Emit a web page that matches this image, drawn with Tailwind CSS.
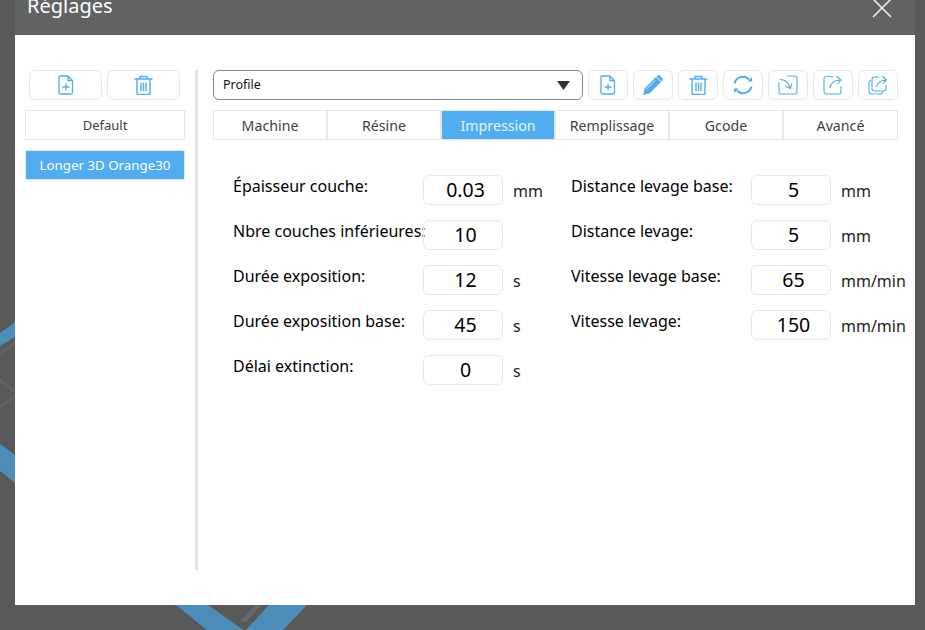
<!DOCTYPE html>
<html lang="fr">
<head>
    <meta charset="UTF-8">
    <title>Réglages</title>
    <script src="https://cdn.jsdelivr.net/npm/@tailwindcss/browser@4"></script>
</head>
<body class="relative w-[925px] h-[630px] overflow-hidden bg-[#595959] font-['Noto_Sans','Open_Sans',sans-serif] text-black">
    <!-- 3D scene behind the dialog -->
    <svg class="absolute inset-0" width="925" height="630" viewBox="0 0 925 630" fill="none">
        <polygon points="0,333 15,322 15,337 0,346" fill="#4d8db9"/>
        <polygon points="0,352 15,341 15,345 0,355" fill="#626262"/>
        <polygon points="0,378 15,390 15,393 0,383" fill="#626262"/>
        <polygon points="0,405 15,395 15,398 0,409" fill="#626262"/>
        <polygon points="0,444 15,455 15,483 0,471" fill="#4d8db9"/>
        <polygon points="176,605 208,605 245,631 269,605 307,605 283,630 207,630" fill="#4d8db9"/>
        <polygon points="240,621 255,605 262,605 246,622" fill="#686868"/>
    </svg>

    <div class="relative ml-[15px] -mt-[15px] w-[900px] h-[620px] flex flex-col">
        <div class="h-[50px] shrink-0 bg-[#616264] flex items-center justify-between pl-3 pr-[23px] text-white">
            <span class="text-[20px] leading-none mb-[8px]">Réglages</span>
            <svg class="mb-[4px]" width="20" height="20" viewBox="0 0 20 20" stroke="#f2f2f2" stroke-width="1.5"><path d="M1 1 19 19M19 1 1 19"/></svg>
        </div>

        <div class="flex-1 bg-white flex pt-[35px] pb-[35px]">
            <!-- Profile list -->
            <div class="w-[170px] shrink-0 pl-[10px] flex flex-col">
                <div class="flex gap-[5px] pl-1">
                    <button class="w-[73px] h-[30px] border border-[#e8e8ec] rounded-md flex items-center justify-center">
                        <svg width="16" height="20" viewBox="0 0 16 20" fill="none" stroke="#4fadf0" stroke-width="1.3"><path d="M1.500 1h8.500l4.500 4.500V17.500a1.500 1.500 0 0 1-1.500 1.500H2.500A1.500 1.500 0 0 1 1 17.500V1.500z"/><path d="M10 1v4.500h4.500M8 8.500v7M4.500 12h7"/></svg>
                    </button>
                    <button class="w-[73px] h-[30px] border border-[#e8e8ec] rounded-md flex items-center justify-center">
                        <svg width="19" height="20" viewBox="0 0 19 20" fill="none" stroke="#4fadf0" stroke-width="1.4"><path d="M.5 4h18M6 4V1.500h7V4M3 4v14a1.500 1.500 0 0 0 1.500 1.500h10A1.500 1.500 0 0 0 16 18V4M7 7.500v8.500M9.500 7.500v8.500M12 7.500v8.500"/></svg>
                    </button>
                </div>
                <div class="mt-[10px] h-[30px] border border-[#e6e6ea] flex items-center justify-center pt-[2px] text-[13px] text-[#3a3f48]">Default</div>
                <div class="mt-[10px] h-[30px] bg-[#4fadf0] border border-[#dfeaf3] flex items-center justify-center pt-[2px] text-[13.300px] text-white">Longer 3D Orange30</div>
            </div>

            <div class="ml-[10px] w-[3px] bg-[#e2e2e7]"></div>

            <!-- Settings -->
            <div class="ml-[15px] w-[685px] flex flex-col">
                <div class="flex gap-[5px]">
                    <div class="w-[370px] h-[30px] border border-[#85878b] rounded-md flex items-center justify-between pl-[9px] pr-[12px] pt-px text-[12.500px] text-[#111]">
                        <span>Profile</span>
                        <svg width="13" height="9" viewBox="0 0 13 9"><path d="M0 0h13L6.500 9z" fill="#333"/></svg>
                    </div>
                    <div class="flex gap-[5px]">
                        <button class="w-[40px] h-[30px] border border-[#e8e8ec] rounded-md flex items-center justify-center">
                            <svg width="16" height="20" viewBox="0 0 16 20" fill="none" stroke="#4fadf0" stroke-width="1.3"><path d="M1.500 1h8.500l4.500 4.500V17.500a1.500 1.500 0 0 1-1.500 1.500H2.500A1.500 1.500 0 0 1 1 17.500V1.500z"/><path d="M10 1v4.500h4.500M8 8.500v7M4.500 12h7"/></svg>
                        </button>
                        <button class="w-[40px] h-[30px] border border-[#e8e8ec] rounded-md flex items-center justify-center">
                            <svg width="20" height="20" viewBox="0 0 20 20" fill="#4fadf0"><path d="M0 20l1.800-6.800L13 2l5 5L6.800 18.200z"/><path d="M14.200 .8a2 2 0 0 1 2.800 0l2.200 2.200a2 2 0 0 1 0 2.800L18.400 6.500 13.500 1.600z"/><path d="M3 14.500l9-9" stroke="#fff" stroke-width=".8"/></svg>
                        </button>
                        <button class="w-[40px] h-[30px] border border-[#e8e8ec] rounded-md flex items-center justify-center">
                            <svg width="19" height="20" viewBox="0 0 19 20" fill="none" stroke="#4fadf0" stroke-width="1.4"><path d="M.5 4h18M6 4V1.500h7V4M3 4v14a1.500 1.500 0 0 0 1.500 1.500h10A1.500 1.500 0 0 0 16 18V4M7 7.500v8.500M9.500 7.500v8.500M12 7.500v8.500"/></svg>
                        </button>
                        <button class="w-[40px] h-[30px] border border-[#e8e8ec] rounded-md flex items-center justify-center">
                            <svg width="20" height="20" viewBox="0 0 20 20" fill="none" stroke="#4fadf0" stroke-width="2"><path d="M1.500 8.500A8.500 8.500 0 0 1 16 4.500M18.500 11.500A8.500 8.500 0 0 1 4 15.500"/><path d="M14.500 6.500h4.500V2z M5.500 13.500H1V18z" fill="#4fadf0" stroke="none"/></svg>
                        </button>
                        <button class="w-[40px] h-[30px] border border-[#e8e8ec] rounded-md flex items-center justify-center">
                            <svg width="20" height="20" viewBox="0 0 20 20" fill="none" stroke="#4fadf0" stroke-width="1.100"><path d="M1 7v9.500A2.500 2.500 0 0 0 3.500 19h13a2.500 2.500 0 0 0 2.500-2.500v-13A2.500 2.500 0 0 0 16.500 1H9"/><path d="M1.500 4.500c5 0 9 2.500 10.500 8M7.500 11.500l4.800 2 1.700-5"/></svg>
                        </button>
                        <button class="w-[40px] h-[30px] border border-[#e8e8ec] rounded-md flex items-center justify-center">
                            <svg width="20" height="20" viewBox="0 0 20 20" fill="none" stroke="#4fadf0" stroke-width="1.100"><path d="M10 1.500H3.500A2.500 2.500 0 0 0 1 4v12.500A2.500 2.500 0 0 0 3.500 19h12a2.500 2.500 0 0 0 2.500-2.500V11"/><path d="M7 13c.5-4.500 4-7.500 10-8M13.500 1l4.500 4-3.500 4"/></svg>
                        </button>
                        <button class="w-[40px] h-[30px] border border-[#e8e8ec] rounded-md flex items-center justify-center">
                            <svg width="20" height="20" viewBox="0 0 20 20" fill="none" stroke="#4fadf0" stroke-width="1.100"><path d="M3 5.500A2 2 0 0 0 1 7.500v9A2.500 2.500 0 0 0 3.500 19h9a2 2 0 0 0 2-2"/><path d="M11 2H6.500A2.500 2.500 0 0 0 4 4.500v9A2.500 2.500 0 0 0 6.500 16h9a2.500 2.500 0 0 0 2.500-2.500V10"/><path d="M8.500 12c.5-4 3.500-6.500 10-7M14.500 1l4 4-3.500 3.500"/></svg>
                        </button>
                    </div>
                </div>

                <div class="mt-[10px] h-[30px] grid grid-cols-[114px_114px_114px_114px_114px_1fr] border border-[#e6e6ea] text-[14.200px] text-[#3a3f48]">
                    <div class="flex items-center justify-center pt-px border-r-2 border-[#e6e6ea]">Machine</div>
                    <div class="flex items-center justify-center pt-px border-r-2 border-[#e6e6ea]">Résine</div>
                    <div class="flex items-center justify-center pt-px border-r-2 border-[#e6e6ea] bg-[#4fadf0] text-[#eaf6ff]">Impression</div>
                    <div class="flex items-center justify-center pt-px border-r-2 border-[#e6e6ea]">Remplissage</div>
                    <div class="flex items-center justify-center pt-px border-r-2 border-[#e6e6ea]">Gcode</div>
                    <div class="flex items-center justify-center pt-px">Avancé</div>
                </div>

                <div class="mt-[35px] pl-[20px] flex">
                    <div class="w-[338px] shrink-0 flex flex-col gap-[15px]">
                        <div class="flex h-[30px]">
                            <span class="w-[190px] shrink-0 text-[16px] leading-[22px] whitespace-nowrap">Épaisseur couche:</span>
                            <div class="w-[80px] h-[30px] shrink-0 border border-[#e8e8ec] rounded-md flex items-center justify-center pl-[5px] bg-white text-[19.500px]">0.03</div>
                            <span class="ml-[10px] text-[16px] leading-[33px] text-[#222]">mm</span>
                        </div>
                        <div class="flex h-[30px]">
                            <span class="w-[190px] shrink-0 text-[16px] leading-[22px] whitespace-nowrap">Nbre couches inférieures:</span>
                            <div class="w-[80px] h-[30px] shrink-0 border border-[#e8e8ec] rounded-md flex items-center justify-center pl-[5px] text-[19.500px]">10</div>
                        </div>
                        <div class="flex h-[30px]">
                            <span class="w-[190px] shrink-0 text-[16px] leading-[22px] whitespace-nowrap">Durée exposition:</span>
                            <div class="w-[80px] h-[30px] shrink-0 border border-[#e8e8ec] rounded-md flex items-center justify-center pl-[5px] text-[19.500px]">12</div>
                            <span class="ml-[10px] text-[16px] leading-[33px] text-[#222]">s</span>
                        </div>
                        <div class="flex h-[30px]">
                            <span class="w-[190px] shrink-0 text-[16px] leading-[22px] whitespace-nowrap">Durée exposition base:</span>
                            <div class="w-[80px] h-[30px] shrink-0 border border-[#e8e8ec] rounded-md flex items-center justify-center pl-[5px] text-[19.500px]">45</div>
                            <span class="ml-[10px] text-[16px] leading-[33px] text-[#222]">s</span>
                        </div>
                        <div class="flex h-[30px]">
                            <span class="w-[190px] shrink-0 text-[16px] leading-[22px] whitespace-nowrap">Délai extinction:</span>
                            <div class="w-[80px] h-[30px] shrink-0 border border-[#e8e8ec] rounded-md flex items-center justify-center pl-[5px] text-[19.500px]">0</div>
                            <span class="ml-[10px] text-[16px] leading-[33px] text-[#222]">s</span>
                        </div>
                    </div>
                    <div class="shrink-0 flex flex-col gap-[15px]">
                        <div class="flex h-[30px]">
                            <span class="w-[180px] shrink-0 text-[16px] leading-[22px] whitespace-nowrap">Distance levage base:</span>
                            <div class="w-[80px] h-[30px] shrink-0 border border-[#e8e8ec] rounded-md flex items-center justify-center pl-[5px] text-[19.500px]">5</div>
                            <span class="ml-[10px] text-[16px] leading-[33px] text-[#222]">mm</span>
                        </div>
                        <div class="flex h-[30px]">
                            <span class="w-[180px] shrink-0 text-[16px] leading-[22px] whitespace-nowrap">Distance levage:</span>
                            <div class="w-[80px] h-[30px] shrink-0 border border-[#e8e8ec] rounded-md flex items-center justify-center pl-[5px] text-[19.500px]">5</div>
                            <span class="ml-[10px] text-[16px] leading-[33px] text-[#222]">mm</span>
                        </div>
                        <div class="flex h-[30px]">
                            <span class="w-[180px] shrink-0 text-[16px] leading-[22px] whitespace-nowrap">Vitesse levage base:</span>
                            <div class="w-[80px] h-[30px] shrink-0 border border-[#e8e8ec] rounded-md flex items-center justify-center pl-[5px] text-[19.500px]">65</div>
                            <span class="ml-[10px] text-[16px] leading-[33px] text-[#222] whitespace-nowrap">mm/min</span>
                        </div>
                        <div class="flex h-[30px]">
                            <span class="w-[180px] shrink-0 text-[16px] leading-[22px] whitespace-nowrap">Vitesse levage:</span>
                            <div class="w-[80px] h-[30px] shrink-0 border border-[#e8e8ec] rounded-md flex items-center justify-center pl-[5px] text-[19.500px]">150</div>
                            <span class="ml-[10px] text-[16px] leading-[33px] text-[#222] whitespace-nowrap">mm/min</span>
                        </div>
                    </div>
                </div>
            </div>
        </div>
    </div>
</body>
</html>
